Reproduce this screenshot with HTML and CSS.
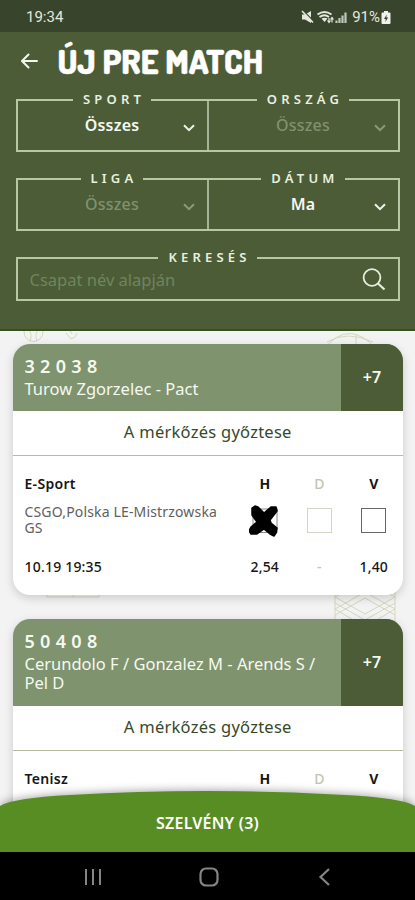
FILE: index.html
```html
<!DOCTYPE html>
<html lang="hu">
<head>
<meta charset="utf-8">
<meta name="viewport" content="width=device-width, initial-scale=1">
<title>Új pre match</title>
<link rel="stylesheet" href="styles.css">
</head>
<body>
<div class="app">
  <div class="status">
    <span class="clock">19:34</span>
    <div class="status-right">
      <svg class="status-icons" width="48" height="14" viewBox="0 0 48 14" fill="none" stroke="#e4e8df">
        <path d="M1 4.500h3l6-3.500v12L4 9.500H1z" fill="#e4e8df" stroke="none"/>
        <path d="M2.500 1l10 10" stroke="#38442b" stroke-width="1.200"/>
        <path d="M1 1l11 11.500" stroke-width="1.600"/>
        <path d="M16.500 4.500q7-5 14 0M18.500 7q5-3.500 9.500 0" stroke-width="1.900"/>
        <path d="M20.500 8.500q3-1.500 6 0L23.500 12z" fill="#e4e8df" stroke="none"/>
        <path d="M28 8v4M26.500 10.500l1.500 2 1.500-2M31 12.500v-4M29.500 9.500l1.500-2 1.500 2" stroke-width="1.200"/>
        <path d="M35.500 13v-2.500M38.500 13V8M41.500 13V5.500M44.500 13V2.500" stroke-width="2.200" opacity=".8"/>
      </svg>
      <span class="percent">91%</span>
      <svg class="battery" width="10" height="13" viewBox="0 0 10 13">
        <path d="M3 0h4v1.500h1.500q1 0 1 1V12q0 1-1 1h-7q-1 0-1-1V2.500q0-1 1-1H3z" fill="#f0f2ed"/>
        <path d="M5.800 3.500L3 8h1.800l-.6 3L7.200 6.500H5.300z" fill="#38442b"/>
      </svg>
    </div>
  </div>
  <header class="header">
    <div class="title-row">
      <svg class="back" width="18" height="18" viewBox="0 0 18 18" fill="none" stroke="#f2f6ec" stroke-width="2" stroke-linecap="round" stroke-linejoin="round"><path d="M16 9H1.500M7.500 2.500L1 9l6.500 6.500"/></svg>
      <h1 class="title">ÚJ PRE MATCH</h1>
    </div>
    <div class="filters">
      <div class="field"><span class="label">SPORT</span><span class="value">Összes</span><svg class="chevron" width="14" height="10" viewBox="0 0 14 10"><path d="M2 2.200l5 5 5-5"/></svg></div>
      <div class="field"><span class="label">ORSZÁG</span><span class="value dim">Összes</span><svg class="chevron dim" width="14" height="10" viewBox="0 0 14 10"><path d="M2 2.200l5 5 5-5"/></svg></div>
    </div>
    <div class="filters">
      <div class="field"><span class="label">LIGA</span><span class="value dim">Összes</span><svg class="chevron dim" width="14" height="10" viewBox="0 0 14 10"><path d="M2 2.200l5 5 5-5"/></svg></div>
      <div class="field"><span class="label">DÁTUM</span><span class="value">Ma</span><svg class="chevron" width="14" height="10" viewBox="0 0 14 10"><path d="M2 2.200l5 5 5-5"/></svg></div>
    </div>
    <div class="search">
      <span class="label">KERESÉS</span>
      <div class="search-row">
        <span class="placeholder">Csapat név alapján</span>
        <svg width="24" height="24" viewBox="0 0 24 24" fill="none" stroke="#e6eedf" stroke-width="1.800"><circle cx="10" cy="9.500" r="8.400"/><path d="M16 15.500l6.500 6" stroke-width="2.200"/></svg>
      </div>
    </div>
  </header>
  <main class="list">
    <svg class="pattern" width="415" height="522" viewBox="0 0 415 522" fill="none" stroke="#d3d8bd" stroke-width="1">
      <circle cx="33.500" cy="1" r="9.500"/><path d="M28-2q5 5 2 12M39-2q-5 5-2 12"/>
      <path d="M66 2l5 6q5-1 6-6M69-2l3 5"/>
      <path d="M324 18q25-31 52 0M327 11q20-12 46 0M356 3v12"/>
      <path d="M47 266h52M47 259v7M73 259v7M99 259v7"/>
      <path d="M335 260h60v30h-60zM335 278l30-17 30 17M335 284l30-17 30 17M335 266l30 17 30-17M335 272l30 17 30-17M335 266l17-9M395 266l-17-9M335 278l20 12M395 278l-20 12"/>
    </svg>
    <article class="card">
      <div class="card-head">
        <div class="match"><span class="code">32038</span><span class="teams">Turow Zgorzelec - Pact</span></div>
        <div class="more">+7</div>
      </div>
      <div class="market">A mérkőzés győztese</div>
      <div class="odds">
        <span class="sport">E-Sport</span><span class="pick">H</span><span class="pick off">D</span><span class="pick">V</span>
        <span class="league">CSGO,Polska LE-Mistrzowska GS</span>
        <span class="box-cell"><svg width="32" height="34" viewBox="0 0 32 34"><rect x="4" y="5" width="24" height="23.500" fill="none" stroke="#888"/><path d="M3 4L6 2l3 1 6 6 7-6 5 0 1 4-7 9 1 3 6 5-1 5-2 3-4-2-6-5-7 5-6 0-2-3 2-4 6-5-5-7z" fill="#000" stroke="#000" stroke-width="1.500" stroke-linejoin="round"/></svg></span>
        <span class="box-cell"><span class="box pale"></span></span>
        <span class="box-cell"><span class="box"></span></span>
        <span class="date">10.19 19:35</span><span class="odd">2,54</span><span class="odd off">-</span><span class="odd">1,40</span>
      </div>
    </article>
    <article class="card">
      <div class="card-head tall">
        <div class="match"><span class="code">50408</span><span class="teams">Cerundolo F / Gonzalez M - Arends S / Pel D</span></div>
        <div class="more">+7</div>
      </div>
      <div class="market">A mérkőzés győztese</div>
      <div class="odds">
        <span class="sport">Tenisz</span><span class="pick">H</span><span class="pick off">D</span><span class="pick">V</span>
      </div>
    </article>
    <div class="ticket">
      <svg class="curve" width="415" height="62" viewBox="0 0 415 62"><path d="M0 15Q13 7 70 4Q207-4 345 4Q402 7 415 15V62H0z" fill="#578d22"/></svg>
      <span class="ticket-text">SZELVÉNY (3)</span>
    </div>
  </main>
  <nav class="nav">
    <svg width="18" height="18" viewBox="0 0 18 18" stroke="#858585" stroke-width="2"><path d="M2 1v16M9 1v16M16 1v16"/></svg>
    <svg class="home" width="20" height="20" viewBox="0 0 20 20" fill="none" stroke="#858585" stroke-width="2.200"><rect x="1.500" y="1.500" width="17" height="17" rx="5.500"/></svg>
    <svg width="12" height="18" viewBox="0 0 12 18" fill="none" stroke="#858585" stroke-width="2.200"><path d="M11 1L2.500 9l8.500 8"/></svg>
  </nav>
</div>
</body>
</html>
```

FILE: styles.css
```css
* { box-sizing: border-box; }
body { margin: 0; font-family: "Noto Sans", sans-serif; }
.app { width: 415px; height: 900px; display: flex; flex-direction: column; overflow: hidden; }
.status { height: 32px; flex: none; background: #38442b; color: #e4e8df; display: flex; align-items: center; justify-content: space-between; padding: 2px 24px 0 26px; font: 15px/18px Roboto, sans-serif; }
.status-right { display: flex; align-items: center; }
.status-icons { margin-right: 3px; }
.battery { margin-left: 1px; }
.header { height: 299px; flex: none; background: #4b5c37; border-bottom: 2px solid #36511b; padding: 0 15.500px; }
.title-row { display: flex; align-items: center; height: 67px; padding-left: 5px; }
.back { margin-top: -9px; }
.title { margin: -10px 0 0 19px; white-space: nowrap; font: 800 33px/40px Dosis, Roboto, sans-serif; letter-spacing: .100px; color: #fff; -webkit-text-stroke: .5px #fff; }
.filters { display: flex; height: 53px; margin-bottom: 26px; border: 2px solid #b7c6a4; }
.field { flex: 1; position: relative; display: flex; flex-direction: column; align-items: center; }
.field + .field { border-left: 2px solid #a5b494; }
.label { height: 16px; margin-top: -10px; padding: 0 6px 0 10px; background: #4b5c37; color: #e8f0e0; font-size: 13px; font-weight: 600; line-height: 16px; letter-spacing: 4.200px; }
.value { margin-top: 7px; color: #f4f8ef; font-size: 16px; font-weight: 600; line-height: 22px; letter-spacing: .2px; }
.value.dim { color: #82916f; font-weight: 500; }
.chevron { position: absolute; right: 11px; top: 22px; fill: none; stroke: #edf3e6; stroke-width: 2; }
.chevron.dim { stroke: #8b9979; }
.search { height: 44px; border: 2px solid #b7c6a4; display: flex; flex-direction: column; align-items: center; }
.search-row { width: 100%; flex: 1; display: flex; justify-content: space-between; align-items: center; padding: 0 12px 5px; }
.placeholder { color: #71855d; font-size: 16.500px; line-height: 24px; }
.list { position: relative; flex: 1; background: #f3f3f3; padding: 12.500px 12px 0 12.500px; overflow: hidden; }
.pattern { position: absolute; left: 0; top: 0; }
.card { position: relative; height: 251.500px; margin-bottom: 24px; background: #fff; border-radius: 17px; overflow: hidden; box-shadow: 0 3px 10px rgba(0,0,0,.17); }
.card-head { display: flex; height: 67px; background: #7e936e; color: #f5f9f0; }
.card-head.tall { height: 86.500px; }
.match { flex: 1; padding: 11px 12px 0; display: flex; flex-direction: column; }
.code { font-size: 18px; font-weight: 600; line-height: 22px; letter-spacing: 5.300px; }
.teams { font-size: 16.500px; line-height: 19px; margin-top: 2px; }
.more { width: 62px; background: #4b5c37; display: flex; align-items: center; justify-content: center; font-size: 16px; font-weight: 600; }
.market { height: 45px; border-bottom: 1.500px solid #b5baa2; color: #36482a; text-align: center; font-size: 16.500px; line-height: 41.500px; letter-spacing: .260px; }
.odds { display: grid; grid-template-columns: 213px 54.500px 54.500px 54.500px; grid-template-rows: 20px 54px 20px; padding: 18px 0 0 12px; color: #151515; font-size: 14px; line-height: 20px; }
.sport { font-weight: 600; letter-spacing: .3px; }
.pick, .odd { text-align: center; }
.pick { font-weight: 700; }
.pick.off, .odd.off { color: #c1c6b0; }
.pick.off { font-weight: 500; }
.league { color: #606060; font-size: 14px; line-height: 16px; padding: 10px 5px 0 0; font-weight: 400; letter-spacing: .160px; }
.date, .odd { padding-top: 9px; font-weight: 500; letter-spacing: .2px; }
.box-cell { display: flex; justify-content: center; align-items: center; }
.box { width: 25px; height: 25px; border: 1px solid #666; }
.box.pale { border-color: #d2d7c5; }
.ticket { position: absolute; left: 0; bottom: 0; width: 415px; height: 61.500px; display: flex; justify-content: center; }
.curve { position: absolute; left: 0; top: 0; filter: drop-shadow(0 -1px 4px rgba(0,0,0,.35)); }
.ticket-text { position: relative; color: #fff; font-size: 16px; font-weight: 600; line-height: 22px; margin-top: 21px; letter-spacing: .2px; }
.nav { height: 48px; flex: none; background: #000; display: flex; align-items: center; justify-content: space-between; padding: 1px 85px 0 84px; }
.home { margin-right: 3px; }
```
